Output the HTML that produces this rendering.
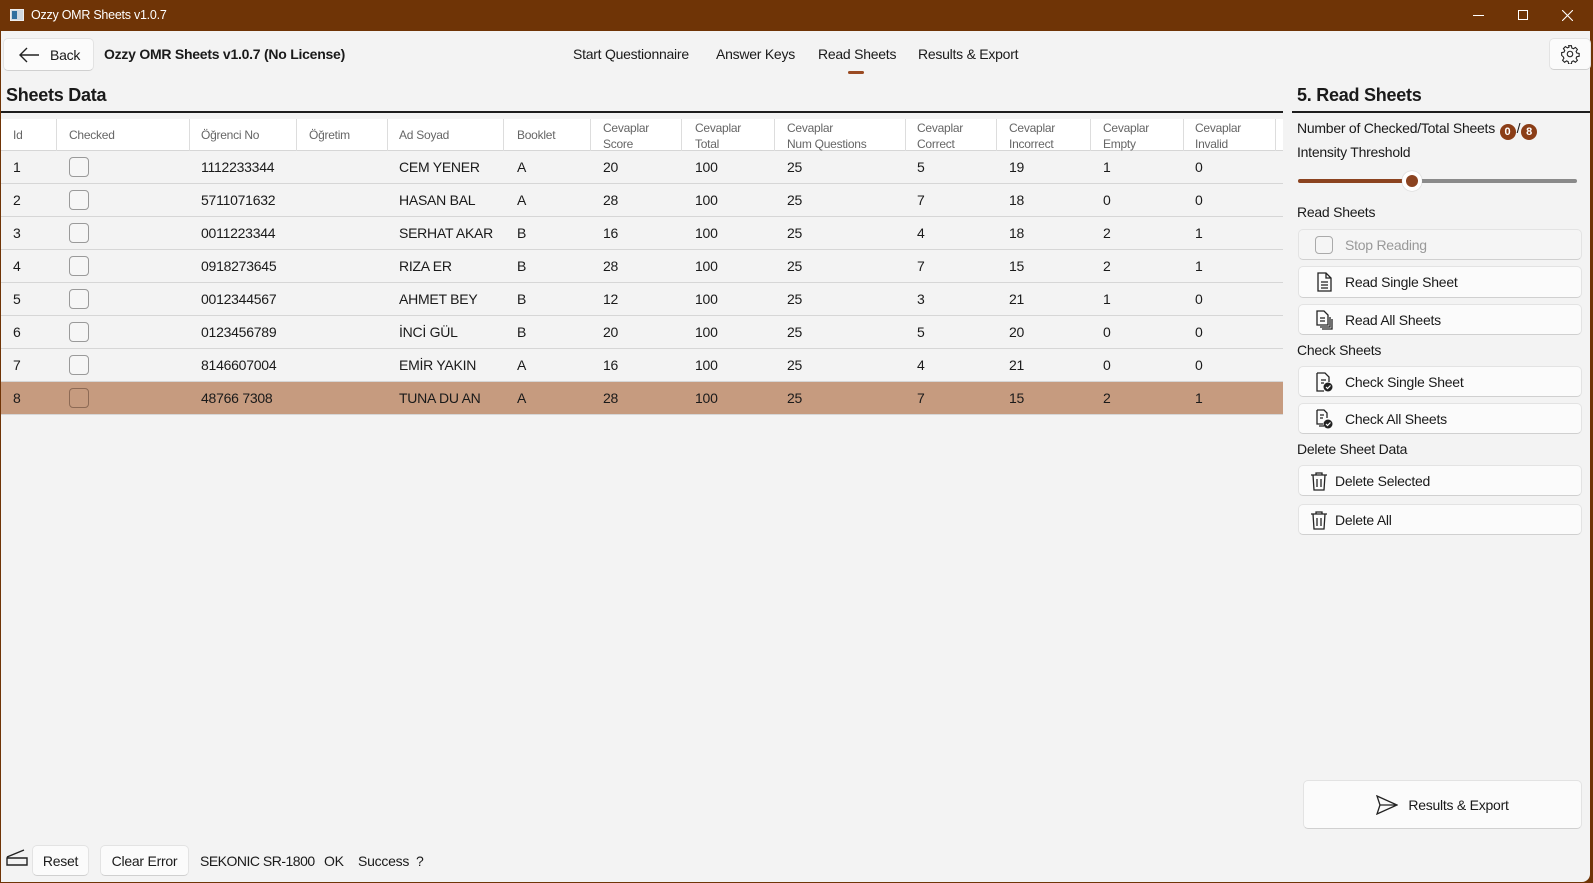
<!DOCTYPE html>
<html><head><meta charset="utf-8"><style>
*{box-sizing:border-box;margin:0;padding:0}
body{width:1593px;height:883px;overflow:hidden;background:#6f3406;font-family:"Liberation Sans",sans-serif;color:#1a1a1a;position:relative;letter-spacing:-0.25px}
.win{position:absolute;left:1px;top:31px;width:1589px;height:851px;background:#f3f3f3;border-bottom-right-radius:8px}
.a{position:absolute;white-space:nowrap}
.btn{position:absolute;background:#fbfbfb;border:1px solid #e3e3e3;border-bottom-color:#d0d0d0;border-radius:5px;font-size:14px;display:flex;align-items:center}
.hdr{font-size:12px;color:#666;line-height:16px}
.cell{font-size:14px}
.cb{position:absolute;width:20px;height:20px;border:1px solid #9a9a9a;border-radius:4px;background:#f6f6f6}
.bd{display:inline-block;width:16px;height:16px;border-radius:8px;background:#8b3e17;color:#fff;font-size:11px;text-align:center;line-height:16px;font-weight:bold;vertical-align:-2px;letter-spacing:0;margin:0 1px}
</style></head><body>
<div class="a" style="left:10px;top:9px;width:14px;height:12px;background:#cfd8e0;border:1px solid #eee"></div>
<div class="a" style="left:12px;top:11px;width:5px;height:8px;background:#2f6f9f"></div>
<div class="a" style="left:31px;top:8px;font-size:12.5px;color:#fff">Ozzy OMR Sheets v1.0.7</div>
<div class="a" style="left:1473px;top:15px;width:11px;height:1px;background:#fff"></div>
<div class="a" style="left:1518px;top:10px;width:10px;height:10px;border:1px solid #fff"></div>
<svg class="a" style="left:1562px;top:10px" width="11" height="11" viewBox="0 0 11 11"><path d="M0 0L11 11M11 0L0 11" stroke="#fff" stroke-width="1.1"/></svg>
<div class="win">
 <div class="btn" style="left:2px;top:7px;width:91px;height:33px;padding-left:14px">
  <svg width="22" height="16" viewBox="0 0 22 16"><path d="M9 1L2 8l7 7M2 8h19" fill="none" stroke="#222" stroke-width="1.4"/></svg><span style="margin-left:10px">Back</span></div>
 <div class="a" style="left:103px;top:15px;font-size:14px;font-weight:bold">Ozzy OMR Sheets v1.0.7 (No License)</div>
 <div class="a" style="left:572px;top:15px;font-size:14px">Start Questionnaire</div>
 <div class="a" style="left:715px;top:15px;font-size:14px">Answer Keys</div>
 <div class="a" style="left:817px;top:15px;font-size:14px">Read Sheets</div>
 <div class="a" style="left:917px;top:15px;font-size:14px">Results &amp; Export</div>
 <div class="a" style="left:847px;top:40px;width:16px;height:3px;border-radius:2px;background:#9a4a22"></div>
 <div class="btn" style="left:1548px;top:7px;width:42px;height:32px;justify-content:center">
  <svg width="20" height="20" viewBox="0 0 24 24"><path d="M10.3 2h3.4l.5 2.8 1.9.9 2.4-1.6 2.4 2.4-1.6 2.4.9 1.9 2.8.5v3.4l-2.8.5-.9 1.9 1.6 2.4-2.4 2.4-2.4-1.6-1.9.9-.5 2.8h-3.4l-.5-2.8-1.9-.9-2.4 1.6-2.4-2.4 1.6-2.4-.9-1.9L2 13.7v-3.4l2.8-.5.9-1.9-1.6-2.4 2.4-2.4 2.4 1.6 1.9-.9z" fill="none" stroke="#222" stroke-width="1.3"/><circle cx="12" cy="12" r="3.3" fill="none" stroke="#222" stroke-width="1.3"/></svg></div>
 <div class="a" style="left:5px;top:54px;font-size:18px;font-weight:bold">Sheets Data</div>
 <div class="a" style="left:0;top:80px;width:1282px;height:2px;background:#1e1e1e"></div>
 <div class="a" style="left:0;top:88px;width:1282px;height:32px;background:#fff;border-bottom:1px solid #d6d6d6"></div>
 <div id="tbl"></div>
 <div class="a" style="left:1296px;top:54px;font-size:18px;font-weight:bold">5. Read Sheets</div>
 <div class="a" style="left:1291px;top:80px;width:298px;height:2px;background:#1e1e1e"></div>
 <div class="a" style="left:1296px;top:89px;font-size:14px">Number of Checked/Total Sheets <span class="bd">0</span>/<span class="bd">8</span></div>
 <div class="a" style="left:1296px;top:113px;font-size:14px">Intensity Threshold</div>
 <div class="a" style="left:1297px;top:148px;width:113px;height:4px;border-radius:2px;background:#8b4320"></div>
 <div class="a" style="left:1410px;top:148px;width:166px;height:4px;border-radius:2px;background:#8a8a8a"></div>
 <div class="a" style="left:1401px;top:140px;width:20px;height:20px;border-radius:10px;background:#fff;box-shadow:0 0 1px #999"></div>
 <div class="a" style="left:1405px;top:144px;width:12px;height:12px;border-radius:6px;background:#8b4320"></div>
 <div class="a" style="left:1296px;top:173px;font-size:14px">Read Sheets</div>
 <div class="btn" style="left:1297px;top:198px;width:284px;height:31px;background:#f5f5f5;color:#999;padding-left:16px"><span style="width:18px;height:18px;border:1px solid #aaa;border-radius:4px;display:inline-block"></span><span style="margin-left:12px">Stop Reading</span></div>
 <div class="btn" style="left:1297px;top:235px;width:284px;height:32px;padding-left:16px"><svg width="18" height="20" viewBox="0 0 18 20"><path d="M3 1h8l5 5v13H3zM11 1v5h5M6 10h7M6 13h7M6 16h7" fill="none" stroke="#222" stroke-width="1.3"/></svg><span style="margin-left:12px">Read Single Sheet</span></div>
 <div class="btn" style="left:1297px;top:273px;width:284px;height:31px;padding-left:16px"><svg width="18" height="20" viewBox="0 0 18 20"><path d="M2 1h7l4 4v10H2zM5 8h5M5 11h5M15 7v10H5M17 9v10H7" fill="none" stroke="#222" stroke-width="1.3"/></svg><span style="margin-left:12px">Read All Sheets</span></div>
 <div class="a" style="left:1296px;top:311px;font-size:14px">Check Sheets</div>
 <div class="btn" style="left:1297px;top:335px;width:284px;height:31px;padding-left:16px"><svg width="18" height="20" viewBox="0 0 18 20"><path d="M2 1h8l4 4v5M9 19H2V1M6 8h5M6 11h3" fill="none" stroke="#222" stroke-width="1.3"/><circle cx="13" cy="15" r="4.5" fill="#222"/><path d="M11 15l1.5 1.5 3-3" stroke="#fff" fill="none" stroke-width="1.2"/></svg><span style="margin-left:12px">Check Single Sheet</span></div>
 <div class="btn" style="left:1297px;top:372px;width:284px;height:31px;padding-left:16px"><svg width="18" height="20" viewBox="0 0 18 20"><path d="M2 1h7l3 3v5M2 1v14h6M5 6h4M5 9h3M4 17h5" fill="none" stroke="#222" stroke-width="1.3"/><circle cx="13" cy="15" r="4.5" fill="#222"/><path d="M11 15l1.5 1.5 3-3" stroke="#fff" fill="none" stroke-width="1.2"/></svg><span style="margin-left:12px">Check All Sheets</span></div>
 <div class="a" style="left:1296px;top:410px;font-size:14px">Delete Sheet Data</div>
 <div class="btn" style="left:1297px;top:434px;width:284px;height:31px;padding-left:10px"><svg width="20" height="20" viewBox="0 0 20 20"><path d="M2 4h16M7 4V2h6v2M4 4l1 15h10l1-15M8 8v8M12 8v8" fill="none" stroke="#222" stroke-width="1.3"/></svg><span style="margin-left:6px">Delete Selected</span></div>
 <div class="btn" style="left:1297px;top:473px;width:284px;height:31px;padding-left:10px"><svg width="20" height="20" viewBox="0 0 20 20"><path d="M2 4h16M7 4V2h6v2M4 4l1 15h10l1-15M8 8v8M12 8v8" fill="none" stroke="#222" stroke-width="1.3"/></svg><span style="margin-left:6px">Delete All</span></div>
 <div class="btn" style="left:1302px;top:749px;width:279px;height:49px;justify-content:center"><svg width="22" height="20" viewBox="0 0 22 20"><path d="M1 1l20 9L1 19l3-9zM4 10h17" fill="none" stroke="#222" stroke-width="1.3"/></svg><span style="margin-left:10px">Results &amp; Export</span></div>
 <svg class="a" style="left:5px;top:817px" width="22" height="18" viewBox="0 0 22 18"><path d="M1 9L18 2M1 10h20v7H1z" fill="none" stroke="#222" stroke-width="1.4"/></svg>
 <div class="btn" style="left:31px;top:814px;width:57px;height:31px;justify-content:center">Reset</div>
 <div class="btn" style="left:99px;top:814px;width:89px;height:31px;justify-content:center">Clear Error</div>
 <div class="a" style="left:199px;top:822px;font-size:14px;letter-spacing:-0.5px">SEKONIC SR-1800</div>
 <div class="a" style="left:323px;top:822px;font-size:14px">OK</div>
 <div class="a" style="left:357px;top:822px;font-size:14px">Success</div>
 <div class="a" style="left:415px;top:822px;font-size:14px">?</div>
</div>
<script>
const cols=[12,68,200,308,398,516,602,694,786,916,1008,1102,1194];
const seps=[55,188,295,386,502,589,680,773,904,995,1089,1182,1274];
const hd=["Id","Checked","Öğrenci No","Öğretim","Ad Soyad","Booklet","Cevaplar<br>Score","Cevaplar<br>Total","Cevaplar<br>Num Questions","Cevaplar<br>Correct","Cevaplar<br>Incorrect","Cevaplar<br>Empty","Cevaplar<br>Invalid"];
const rows=[["1","","1112233344","","CEM YENER","A","20","100","25","5","19","1","0"],
["2","","5711071632","","HASAN BAL","A","28","100","25","7","18","0","0"],
["3","","0011223344","","SERHAT AKAR","B","16","100","25","4","18","2","1"],
["4","","0918273645","","RIZA ER","B","28","100","25","7","15","2","1"],
["5","","0012344567","","AHMET BEY","B","12","100","25","3","21","1","0"],
["6","","0123456789","","İNCİ GÜL","B","20","100","25","5","20","0","0"],
["7","","8146607004","","EMİR YAKIN","A","16","100","25","4","21","0","0"],
["8","","48766 7308","","TUNA DU AN","A","28","100","25","7","15","2","1"]];
let h="";
seps.forEach(s=>h+=`<div class="a" style="left:${s}px;top:88px;width:1px;height:32px;background:#ddd"></div>`);
hd.forEach((t,i)=>{const two=t.includes("<br>");h+=`<div class="a hdr" style="left:${cols[i]}px;top:${two?89:96}px">${t}</div>`});
rows.forEach((r,j)=>{const y=120+j*33;
 h+=`<div class="a" style="left:0;top:${y}px;width:1282px;height:33px;border-bottom:1px solid #d6d6d6;${j==7?'background:#c69b7f':''}"></div>`;
 r.forEach((t,i)=>{ if(i==1) h+=`<div class="cb" style="left:68px;top:${y+6}px;${j==7?'background:#c69b7f;border-color:#8d6a55':''}"></div>`; else h+=`<div class="a cell" style="left:${cols[i]}px;top:${y+8}px">${t}</div>`;});
});
document.getElementById("tbl").outerHTML=h;
</script>
</body></html>
